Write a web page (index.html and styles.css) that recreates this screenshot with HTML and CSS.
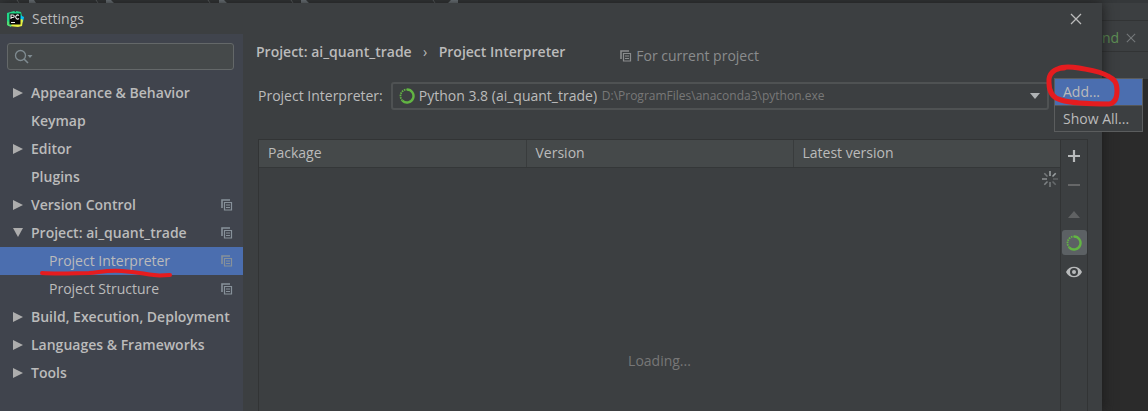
FILE: index.html
```html
<!DOCTYPE html>
<html lang="en">
<head>
<meta charset="utf-8">
<title>Settings</title>
<link rel="stylesheet" href="styles.css">
</head>
<body>
<svg class="defs" aria-hidden="true">
  <symbol id="copy" viewBox="0 0 12 12">
    <path d="M1 9V1h8" fill="none" stroke="currentColor" stroke-width="1.6"/>
    <path d="M3.5 3.5h7v7.500h-7z" fill="none" stroke="currentColor" stroke-width="1.2"/>
    <path d="M5 6h4M5 8.500h4" stroke="currentColor"/>
  </symbol>
  <symbol id="right" viewBox="0 0 10 12"><path d="M0 1l10 5-10 5z" fill="currentColor"/></symbol>
  <symbol id="down" viewBox="0 0 10 12"><path d="M0 1h10L5 10z" fill="currentColor"/></symbol>
  <symbol id="ring" viewBox="0 0 16 16">
    <path d="M8 1.500a6.500 6.500 0 1 1-4.600 11.100" fill="none" stroke="#62b543" stroke-width="2.400"/>
    <path d="M3.400 12.600A6.500 6.500 0 0 1 8 1.500" fill="none" stroke="#62b543" stroke-width="1.800" stroke-dasharray="1.500 .9"/>
  </symbol>
  <symbol id="close" viewBox="0 0 12 12"><path d="M1 1l10 10M11 1L1 11" stroke="currentColor" stroke-width="1.300"/></symbol>
</svg>

<div class="ide-strip">
  <svg viewBox="0 0 460 3" aria-hidden="true">
    <path d="M17 0l2 3M96 0l2 3M208 0l2 3M291 0l2 3M433 0l2 3" stroke="#666a6c"/>
    <path d="M29 0h5l2 3h-7zM106 0h5l3 3h-8zM219 0h5l3 3h-8zM301 0h5l3 3h-8zM451 0h7v3h-10z" fill="#7d868c"/>
  </svg>
</div>

<div class="desktop">
  <section class="dialog" aria-label="Settings">
    <header class="titlebar">
      <svg class="logo" viewBox="0 0 18 18" aria-hidden="true">
        <path d="M1 3l7-2 3 2-2 12-7 1-1-5z" fill="#21d789"/>
        <path d="M10 1l5 1 1 4-5 3z" fill="#21d789"/>
        <path d="M14 5l4 2-1 5-4 2z" fill="#07c3f2"/>
        <path d="M2 13l13-4 2 1-1 6-4 1-9-1z" fill="#e8ef40"/>
        <path d="M1 11l5 2-1 4-4-2z" fill="#52dc73"/>
        <path d="M3.500 3.500h11v11h-11z" fill="#080808"/>
        <path d="M5 9V5h2a1.200 1.200 0 0 1 0 2.500H5M13 5.500a2 2 0 1 0 0 3M5 12.500h4" fill="none" stroke="#eee" stroke-width="1.100"/>
      </svg>
      <h1>Settings</h1>
      <button class="close" aria-label="Close"><svg viewBox="0 0 12 12"><use href="#close"/></svg></button>
    </header>

    <div class="dialog-body">
      <aside class="sidebar">
        <label class="search">
          <svg viewBox="0 0 20 16" aria-hidden="true">
            <circle cx="6.500" cy="6.500" r="5" fill="none" stroke="#7f8b91" stroke-width="1.300"/>
            <path d="M10 10l4 4" stroke="#7f8b91" stroke-width="1.600"/>
            <path d="M13.500 6h5L16 9z" fill="#7f8b91"/>
          </svg>
          <input type="search" aria-label="Search settings">
        </label>
        <nav class="tree" aria-label="Settings categories">
          <button><svg class="arrow"><use href="#right"/></svg><span>Appearance &amp; Behavior</span></button>
          <button class="leaf"><span>Keymap</span></button>
          <button><svg class="arrow"><use href="#right"/></svg><span>Editor</span></button>
          <button class="leaf"><span>Plugins</span></button>
          <button><svg class="arrow"><use href="#right"/></svg><span>Version Control</span><svg class="scope"><use href="#copy"/></svg></button>
          <button aria-expanded="true"><svg class="arrow"><use href="#down"/></svg><span>Project: ai_quant_trade</span><svg class="scope"><use href="#copy"/></svg></button>
          <button class="child selected" aria-current="page"><span class="marked">Project Interpreter
            <svg class="underline" viewBox="0 0 132 8" aria-hidden="true"><path d="M2 5c16 1 35 0 47 0 12-1 18-3 33-2 16 1 22 3 32 4 6 1 10 0 16 0" fill="none" stroke="#e51c1f" stroke-width="4" stroke-linecap="round"/></svg></span><svg class="scope"><use href="#copy"/></svg></button>
          <button class="child"><span>Project Structure</span><svg class="scope"><use href="#copy"/></svg></button>
          <button><svg class="arrow"><use href="#right"/></svg><span>Build, Execution, Deployment</span></button>
          <button><svg class="arrow"><use href="#right"/></svg><span>Languages &amp; Frameworks</span></button>
          <button><svg class="arrow"><use href="#right"/></svg><span>Tools</span></button>
        </nav>
      </aside>

      <main class="content">
        <div class="heading">
          <h2>Project: ai_quant_trade</h2><span class="chevron">›</span><h2>Project Interpreter</h2>
          <p class="note"><svg><use href="#copy"/></svg>For current project</p>
        </div>
        <div class="field">
          <label for="interpreter">Project Interpreter:</label>
          <div class="combo">
            <svg class="ring"><use href="#ring"/></svg>
            <select id="interpreter"><option>Python 3.8 (ai_quant_trade)</option></select>
            <span class="path">D:\ProgramFiles\anaconda3\python.exe</span>
            <svg class="caret" viewBox="0 0 10 6" aria-hidden="true"><path d="M0 0h10L5 6z" fill="#b0b3b5"/></svg>
          </div>
          <div class="menu-anchor">
            <div class="menu" role="menu">
              <button class="active" role="menuitem">Add...</button>
              <button role="menuitem">Show All...</button>
              <svg class="circle" viewBox="0 0 74 42" aria-hidden="true"><path d="M18 3C8 3 2 9 3 18c0 9 4 15 12 17 13 4 33 4 48 4 7-1 8-7 8-13 0-9-3-12-9-15C54 6 43 5 33 3 27 2 17 1 12 4" fill="none" stroke="#e51c1f" stroke-width="5" stroke-linecap="round"/></svg>
            </div>
          </div>
        </div>
        <div class="packages">
          <div class="list">
            <table>
              <thead><tr><th>Package</th><th>Version</th><th>Latest version</th></tr></thead>
            </table>
            <svg class="spinner" viewBox="0 0 16 16" aria-label="Loading">
              <g stroke="#9a9fa1" stroke-width="1.600"><path d="M8 0v5"/><path d="M13.700 2.300L10.500 5.500"/><path d="M16 8h-5" opacity=".35"/><path d="M13.700 13.700l-3.200-3.200" opacity=".45"/><path d="M8 16v-5" opacity=".6"/><path d="M2.300 13.700l3.200-3.200" opacity=".7"/><path d="M0 8h5" opacity=".8"/><path d="M2.300 2.300l3.200 3.200" opacity=".6"/></g>
            </svg>
            <p class="loading">Loading...</p>
          </div>
          <div class="tools">
            <button aria-label="Install"><svg viewBox="0 0 16 16"><path d="M8 2v12M2 8h12" stroke="#b8babb" stroke-width="2.200"/></svg></button>
            <button aria-label="Uninstall"><svg viewBox="0 0 16 16"><path d="M2 8h12" stroke="#666768" stroke-width="2"/></svg></button>
            <button aria-label="Upgrade"><svg viewBox="0 0 16 16"><path d="M2 12l6-7 6 7z" fill="#606263"/></svg></button>
            <button class="pressed" aria-label="Use Conda Package Manager" aria-pressed="true"><svg><use href="#ring"/></svg></button>
            <button aria-label="Show Early Releases"><svg viewBox="0 0 16 16"><path d="M0 8c3-7 13-7 16 0-3 7-13 7-16 0z" fill="#b8babb"/><circle cx="8" cy="8" r="4" fill="#3c3f41"/><circle cx="8" cy="8" r="2" fill="#b8babb"/></svg></button>
          </div>
        </div>
      </main>
    </div>
  </section>

  <aside class="editor" aria-label="Editor">
    <div class="editor-bar"></div>
    <div class="tab"><span>nd</span><button aria-label="Close tab"><svg viewBox="0 0 12 12"><use href="#close"/></svg></button></div>
    <div class="editor-bar lower"></div>
  </aside>
</div>
</body>
</html>
```
FILE: styles.css
```css
* { box-sizing: border-box; }

body {
  margin: 0;
  min-height: 100vh;
  display: flex;
  flex-direction: column;
  background: #2b2b2b;
  color: #bbbbbb;
  font: 14px/20px "Open Sans", "Noto Sans", sans-serif;
}

h1, h2, p { margin: 0; font-size: inherit; }
button, input, select { font: inherit; color: inherit; background: none; border: 0; padding: 0; }
svg { display: block; flex: none; }
.defs { position: absolute; width: 0; height: 0; }

.ide-strip { height: 3px; background: #35383a; overflow: hidden; }
.ide-strip svg { width: 460px; height: 3px; }

.desktop { flex: 1; display: flex; }
.dialog { flex: 1; min-width: 0; display: flex; flex-direction: column; background: #3c3f41; z-index: 1; box-shadow: 0 0 12px #1a1a1a; }

.titlebar { height: 31px; display: flex; align-items: center; gap: 8px; padding: 0 20px 0 6px; }
.titlebar h1 { flex: 1; font-weight: 400; }
.logo { width: 18px; height: 18px; }
.close svg { width: 12px; height: 12px; }

.dialog-body { flex: 1; display: flex; }

.sidebar { width: 243px; flex: none; padding-top: 9px; background: #40444d; }
.search {
  height: 27px;
  margin: 0 9px 9px 7px;
  padding: 0 6px;
  display: flex;
  align-items: center;
  background: #45494a;
  border: 1px solid #646869;
  border-radius: 3px;
}
.search svg { width: 20px; height: 16px; }
.search input { flex: 1; min-width: 0; outline: 0; }

.tree { display: flex; flex-direction: column; }
.tree button {
  height: 28px;
  display: flex;
  align-items: center;
  gap: 8px;
  padding: 0 10px 0 13px;
  text-align: left;
  font-weight: 600;
  white-space: nowrap;
}
.tree span { flex: 1; }
.tree .leaf { padding-left: 31px; }
.tree .child { padding-left: 49px; font-weight: 400; }
.tree .selected { background: #4b6eaf; }
.arrow { width: 10px; height: 12px; color: #adadad; }
.scope { width: 12px; height: 12px; color: #87919a; }
.marked { position: relative; }
.underline { position: absolute; left: -9px; top: 17px; width: 132px; height: 8px; overflow: visible; }

.content { flex: 1; min-width: 0; display: flex; flex-direction: column; padding: 8px 14px 0 13px; }
.heading { display: flex; align-items: flex-start; height: 28px; white-space: nowrap; }
.heading h2 { font-weight: 600; }
.chevron { width: 27px; text-align: center; }
.note { display: flex; align-items: center; gap: 4px; padding-top: 4px; margin-left: 55px; color: #8a8c8d; }
.note svg { width: 12px; height: 12px; }

.field { display: flex; align-items: center; gap: 8px; margin: 12px 0 29px 2px; white-space: nowrap; }
.combo {
  flex: 1;
  height: 28px;
  display: flex;
  align-items: center;
  gap: 4px;
  padding: 0 7px 0 6px;
  border: 2px solid #4f5253;
  border-radius: 3px;
}
.ring { width: 16px; height: 16px; }
.combo select { appearance: none; outline: 0; }
.path { flex: 1; font-size: 12px; color: #787878; }
.caret { width: 10px; height: 6px; }

.menu-anchor { position: relative; width: 31px; height: 28px; }
.menu {
  position: absolute;
  left: -3px;
  top: -4px;
  width: 89px;
  display: flex;
  flex-direction: column;
  background: #3c3f41;
  border: 1px solid #5b5d5e;
}
.menu button { height: 26px; padding: 0 8px; text-align: left; white-space: nowrap; }
.menu .active { background: #4b6eaf; }
.menu button + button { border-top: 1px solid #555758; }
.circle { position: absolute; left: -9px; top: -14px; width: 74px; height: 42px; overflow: visible; }

.packages { flex: 1; display: flex; margin-left: 2px; border: 1px solid #323435; border-bottom: 0; }
.list { flex: 1; display: flex; flex-direction: column; border-right: 1px solid #323435; }
table { width: 100%; table-layout: fixed; border-collapse: collapse; background: #45494a; }
th { height: 27px; padding: 0 9px; text-align: left; font-weight: 400; border-bottom: 1px solid #343738; }
th + th { border-left: 1px solid #393c3d; }
.spinner { width: 16px; height: 16px; margin: 3px 2px 0 0; align-self: flex-end; }
.loading { margin: auto; padding-top: 124px; color: #777777; }

.tools { width: 26px; display: flex; flex-direction: column; align-items: center; gap: 4px; padding-top: 3px; }
.tools button { width: 25px; height: 25px; display: grid; place-items: center; border-radius: 3px; }
.tools svg { width: 16px; height: 16px; }
.tools .pressed { background: #5c6164; }

.editor { width: 46px; flex: none; overflow: hidden; }
.editor-bar { height: 18px; background: #3c3f41; border-bottom: 1px solid #323435; }
.editor-bar.lower { height: 27px; border: 0; }
.tab { height: 31px; display: flex; align-items: center; gap: 7px; background: #3c3f41; border-bottom: 1px solid #323435; color: #5d8f54; padding-top: 3px; }
.tab button { color: #74787a; }
.tab svg { width: 10px; height: 10px; }
```
